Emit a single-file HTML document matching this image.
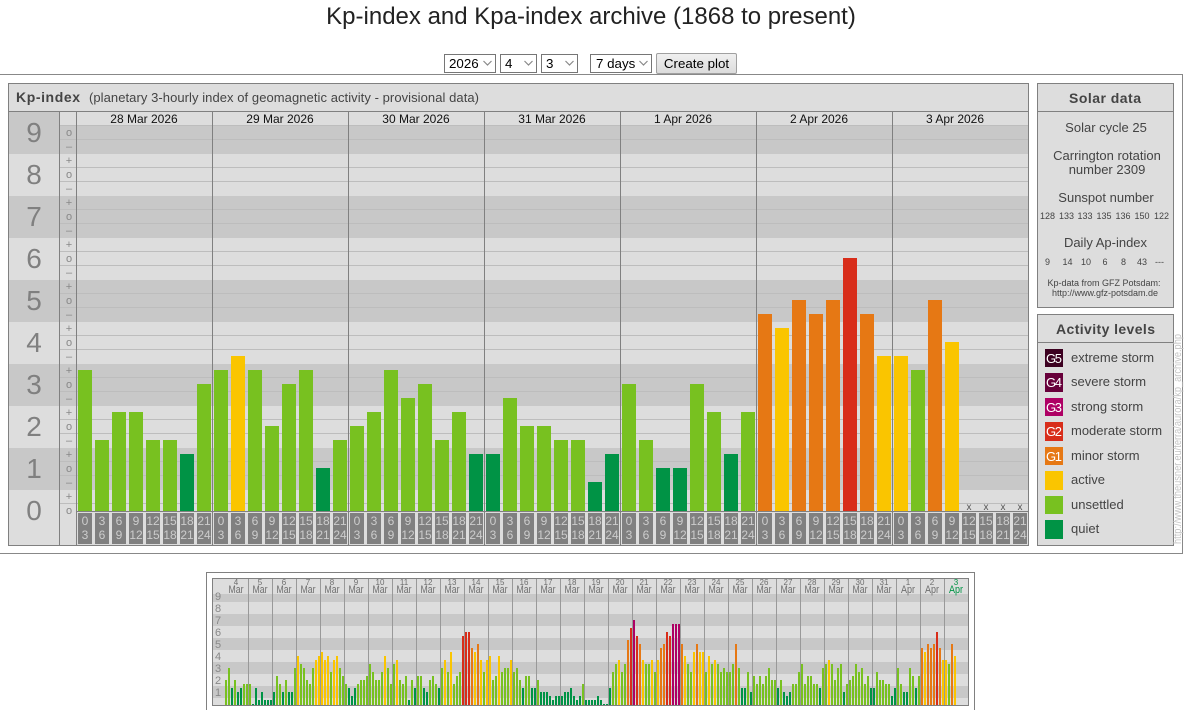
<!DOCTYPE html>
<html><head><meta charset="utf-8"><title>Kp-index and Kpa-index archive</title>
<style>
html,body{margin:0;padding:0;background:#fff;width:1184px;height:710px;overflow:hidden}
body{position:relative;font-family:"Liberation Sans",Arial,sans-serif}
svg{position:absolute;left:0;top:0;font-family:"Liberation Sans",Arial,sans-serif}
select{position:absolute;box-sizing:border-box;top:54px;height:19px;font:13.33px "Liberation Sans",Arial,sans-serif;background:#fff;border:1px solid #767676;padding:0 0 0 1px;margin:0;color:#000;border-radius:0;-webkit-appearance:none;appearance:none}
button{position:absolute;box-sizing:border-box;left:656px;top:53px;width:81px;height:21px;font:13.33px "Liberation Sans",Arial,sans-serif;background:linear-gradient(#f0f0f0,#dcdcdc);border:1px solid #a0a0a0;border-radius:2px;padding:0;color:#000}
.m text{text-anchor:middle}
.main rect{width:14px}
.mini rect{width:2px}
.q{fill:#009345}.u{fill:#78c120}.a{fill:#fac500}.o{fill:#e67814}.r{fill:#d82d1a}.s{fill:#ae0064}
.tk rect{width:14px;height:31px;fill:#808080}
.tk text{font-size:12px;fill:#ccc;text-anchor:middle}
.pm text{font-size:11px;fill:#888;text-anchor:middle}
.big text{font-size:28px;fill:#808080;text-anchor:middle}
.d text{font-size:12px;fill:#111;text-anchor:middle}
.x text{font-size:10px;fill:#555;text-anchor:middle}
.sol text{fill:#444;text-anchor:middle;font-size:13px}
.sol .n text,.sol text.n{font-size:9px}
.leg text{fill:#444;font-size:13px}
.leg text.g{fill:#fff;text-anchor:middle}
.ml text{fill:#888;font-size:11px;text-anchor:middle}
.md text{fill:#6e6e6e;text-anchor:middle}
</style></head><body>
<svg width="1184" height="710" viewBox="0 0 1184 710">
<text x="591" y="24" font-size="24" fill="#222" text-anchor="middle">Kp-index and Kpa-index archive (1868 to present)</text>
<path d="M0 74.5H1182.5V553.5H0" fill="none" stroke="#888"/>
<!-- main chart backgrounds -->
<rect x="8" y="83" width="1021" height="463" fill="#ddd"/>
<g fill="#c8c8c8">
<rect x="9" y="112" width="50" height="42"/><rect x="60" y="125" width="968" height="29"/>
<rect x="9" y="196" width="1019" height="42"/><rect x="9" y="280" width="1019" height="42"/><rect x="9" y="364" width="1019" height="42"/><rect x="9" y="448" width="1019" height="42"/>
</g>
<path d="M60 125.500H1028M60 139.500H1028M60 167.500H1028M60 181.500H1028M60 209.500H1028M60 223.500H1028M60 251.500H1028M60 265.500H1028M60 293.500H1028M60 307.500H1028M60 335.500H1028M60 349.500H1028M60 377.500H1028M60 391.500H1028M60 419.500H1028M60 433.500H1028M60 461.500H1028M60 475.500H1028M60 503.500H1028" stroke="#bdbdbd" fill="none"/>
<!-- bars -->
<g class="main" transform="translate(78,511) scale(1,-1)">
<rect x="0" height="141" class="u"/><rect x="17" height="71" class="u"/><rect x="34" height="99" class="u"/><rect x="51" height="99" class="u"/><rect x="68" height="71" class="u"/><rect x="85" height="71" class="u"/><rect x="102" height="57" class="q"/><rect x="119" height="127" class="u"/>
<rect x="136" height="141" class="u"/><rect x="153" height="155" class="a"/><rect x="170" height="141" class="u"/><rect x="187" height="85" class="u"/><rect x="204" height="127" class="u"/><rect x="221" height="141" class="u"/><rect x="238" height="43" class="q"/><rect x="255" height="71" class="u"/>
<rect x="272" height="85" class="u"/><rect x="289" height="99" class="u"/><rect x="306" height="141" class="u"/><rect x="323" height="113" class="u"/><rect x="340" height="127" class="u"/><rect x="357" height="71" class="u"/><rect x="374" height="99" class="u"/><rect x="391" height="57" class="q"/>
<rect x="408" height="57" class="q"/><rect x="425" height="113" class="u"/><rect x="442" height="85" class="u"/><rect x="459" height="85" class="u"/><rect x="476" height="71" class="u"/><rect x="493" height="71" class="u"/><rect x="510" height="29" class="q"/><rect x="527" height="57" class="q"/>
<rect x="544" height="127" class="u"/><rect x="561" height="71" class="u"/><rect x="578" height="43" class="q"/><rect x="595" height="43" class="q"/><rect x="612" height="127" class="u"/><rect x="629" height="99" class="u"/><rect x="646" height="57" class="q"/><rect x="663" height="99" class="u"/>
<rect x="680" height="197" class="o"/><rect x="697" height="183" class="a"/><rect x="714" height="211" class="o"/><rect x="731" height="197" class="o"/><rect x="748" height="211" class="o"/><rect x="765" height="253" class="r"/><rect x="782" height="197" class="o"/><rect x="799" height="155" class="a"/>
<rect x="816" height="155" class="a"/><rect x="833" height="141" class="u"/><rect x="850" height="211" class="o"/><rect x="867" height="169" class="a"/>
</g>
<path d="M77 511.500H1028" stroke="#808080"/>
<!-- tick boxes -->
<g class="tk" transform="translate(78,513)"><rect x="0"/><rect x="17"/><rect x="34"/><rect x="51"/><rect x="68"/><rect x="85"/><rect x="102"/><rect x="119"/><text x="7" y="12">0</text><text x="7" y="26">3</text><text x="24" y="12">3</text><text x="24" y="26">6</text><text x="41" y="12">6</text><text x="41" y="26">9</text><text x="58" y="12">9</text><text x="58" y="26">12</text><text x="75" y="12">12</text><text x="75" y="26">15</text><text x="92" y="12">15</text><text x="92" y="26">18</text><text x="109" y="12">18</text><text x="109" y="26">21</text><text x="126" y="12">21</text><text x="126" y="26">24</text></g>
<g class="tk" transform="translate(214,513)"><rect x="0"/><rect x="17"/><rect x="34"/><rect x="51"/><rect x="68"/><rect x="85"/><rect x="102"/><rect x="119"/><text x="7" y="12">0</text><text x="7" y="26">3</text><text x="24" y="12">3</text><text x="24" y="26">6</text><text x="41" y="12">6</text><text x="41" y="26">9</text><text x="58" y="12">9</text><text x="58" y="26">12</text><text x="75" y="12">12</text><text x="75" y="26">15</text><text x="92" y="12">15</text><text x="92" y="26">18</text><text x="109" y="12">18</text><text x="109" y="26">21</text><text x="126" y="12">21</text><text x="126" y="26">24</text></g>
<g class="tk" transform="translate(350,513)"><rect x="0"/><rect x="17"/><rect x="34"/><rect x="51"/><rect x="68"/><rect x="85"/><rect x="102"/><rect x="119"/><text x="7" y="12">0</text><text x="7" y="26">3</text><text x="24" y="12">3</text><text x="24" y="26">6</text><text x="41" y="12">6</text><text x="41" y="26">9</text><text x="58" y="12">9</text><text x="58" y="26">12</text><text x="75" y="12">12</text><text x="75" y="26">15</text><text x="92" y="12">15</text><text x="92" y="26">18</text><text x="109" y="12">18</text><text x="109" y="26">21</text><text x="126" y="12">21</text><text x="126" y="26">24</text></g>
<g class="tk" transform="translate(486,513)"><rect x="0"/><rect x="17"/><rect x="34"/><rect x="51"/><rect x="68"/><rect x="85"/><rect x="102"/><rect x="119"/><text x="7" y="12">0</text><text x="7" y="26">3</text><text x="24" y="12">3</text><text x="24" y="26">6</text><text x="41" y="12">6</text><text x="41" y="26">9</text><text x="58" y="12">9</text><text x="58" y="26">12</text><text x="75" y="12">12</text><text x="75" y="26">15</text><text x="92" y="12">15</text><text x="92" y="26">18</text><text x="109" y="12">18</text><text x="109" y="26">21</text><text x="126" y="12">21</text><text x="126" y="26">24</text></g>
<g class="tk" transform="translate(622,513)"><rect x="0"/><rect x="17"/><rect x="34"/><rect x="51"/><rect x="68"/><rect x="85"/><rect x="102"/><rect x="119"/><text x="7" y="12">0</text><text x="7" y="26">3</text><text x="24" y="12">3</text><text x="24" y="26">6</text><text x="41" y="12">6</text><text x="41" y="26">9</text><text x="58" y="12">9</text><text x="58" y="26">12</text><text x="75" y="12">12</text><text x="75" y="26">15</text><text x="92" y="12">15</text><text x="92" y="26">18</text><text x="109" y="12">18</text><text x="109" y="26">21</text><text x="126" y="12">21</text><text x="126" y="26">24</text></g>
<g class="tk" transform="translate(758,513)"><rect x="0"/><rect x="17"/><rect x="34"/><rect x="51"/><rect x="68"/><rect x="85"/><rect x="102"/><rect x="119"/><text x="7" y="12">0</text><text x="7" y="26">3</text><text x="24" y="12">3</text><text x="24" y="26">6</text><text x="41" y="12">6</text><text x="41" y="26">9</text><text x="58" y="12">9</text><text x="58" y="26">12</text><text x="75" y="12">12</text><text x="75" y="26">15</text><text x="92" y="12">15</text><text x="92" y="26">18</text><text x="109" y="12">18</text><text x="109" y="26">21</text><text x="126" y="12">21</text><text x="126" y="26">24</text></g>
<g class="tk" transform="translate(894,513)"><rect x="0"/><rect x="17"/><rect x="34"/><rect x="51"/><rect x="68"/><rect x="85"/><rect x="102"/><rect x="119"/><text x="7" y="12">0</text><text x="7" y="26">3</text><text x="24" y="12">3</text><text x="24" y="26">6</text><text x="41" y="12">6</text><text x="41" y="26">9</text><text x="58" y="12">9</text><text x="58" y="26">12</text><text x="75" y="12">12</text><text x="75" y="26">15</text><text x="92" y="12">15</text><text x="92" y="26">18</text><text x="109" y="12">18</text><text x="109" y="26">21</text><text x="126" y="12">21</text><text x="126" y="26">24</text></g>
<g class="x"><text x="969" y="510">x</text><text x="986" y="510">x</text><text x="1003" y="510">x</text><text x="1020" y="510">x</text></g>
<!-- frame lines -->
<path d="M59.500 112V545M76.500 112V545M212.500 112V545M348.500 112V545M484.500 112V545M620.500 112V545M756.500 112V545M892.500 112V545M9 111.500H1028" stroke="#808080" fill="none"/>
<rect x="8.500" y="83.500" width="1020" height="462" fill="none" stroke="#808080"/>
<!-- header -->
<text x="16" y="102" font-size="14" font-weight="bold" fill="#444" textLength="64">Kp-index</text>
<text x="89" y="102" font-size="13" fill="#444" textLength="390">(planetary 3-hourly index of geomagnetic activity - provisional data)</text>
<g class="d"><text x="144" y="123">28 Mar 2026</text><text x="280" y="123">29 Mar 2026</text><text x="416" y="123">30 Mar 2026</text><text x="552" y="123">31 Mar 2026</text><text x="683" y="123">1 Apr 2026</text><text x="819" y="123">2 Apr 2026</text><text x="955" y="123">3 Apr 2026</text></g>
<g class="big"><text x="34" y="142">9</text><text x="34" y="184">8</text><text x="34" y="226">7</text><text x="34" y="268">6</text><text x="34" y="310">5</text><text x="34" y="352">4</text><text x="34" y="394">3</text><text x="34" y="436">2</text><text x="34" y="478">1</text><text x="34" y="520">0</text></g>
<g class="pm">
<text x="69" y="136">o</text><text x="69" y="150">–</text>
<text x="69" y="164">+</text><text x="69" y="178">o</text><text x="69" y="192">–</text>
<text x="69" y="206">+</text><text x="69" y="220">o</text><text x="69" y="234">–</text>
<text x="69" y="248">+</text><text x="69" y="262">o</text><text x="69" y="276">–</text>
<text x="69" y="290">+</text><text x="69" y="304">o</text><text x="69" y="318">–</text>
<text x="69" y="332">+</text><text x="69" y="346">o</text><text x="69" y="360">–</text>
<text x="69" y="374">+</text><text x="69" y="388">o</text><text x="69" y="402">–</text>
<text x="69" y="416">+</text><text x="69" y="430">o</text><text x="69" y="444">–</text>
<text x="69" y="458">+</text><text x="69" y="472">o</text><text x="69" y="486">–</text>
<text x="69" y="500">+</text><text x="69" y="514">o</text>
</g>
<!-- solar data -->
<rect x="1037.500" y="83.500" width="136" height="224" fill="#ddd" stroke="#808080"/>
<path d="M1038 111.500H1173" stroke="#808080"/>
<g class="sol">
<text x="1105" y="103" font-weight="bold" style="font-size:14px" textLength="72">Solar data</text>
<text x="1106" y="132">Solar cycle 25</text>
<text x="1107" y="160">Carrington rotation</text>
<text x="1107" y="174">number 2309</text>
<text x="1106" y="202">Sunspot number</text>
<g class="n"><text x="1047.500" y="219">128</text><text x="1066.500" y="219">133</text><text x="1085" y="219">133</text><text x="1104" y="219">135</text><text x="1123" y="219">136</text><text x="1142" y="219">150</text><text x="1161.500" y="219">122</text></g>
<text x="1105.500" y="247">Daily Ap-index</text>
<g class="n"><text x="1047.500" y="265">9</text><text x="1067.500" y="265">14</text><text x="1086" y="265">10</text><text x="1105" y="265">6</text><text x="1123.500" y="265">8</text><text x="1142" y="265">43</text><text x="1159.500" y="265">---</text></g>
<g class="n"><text x="1104" y="286">Kp-data from GFZ Potsdam:</text><text x="1105" y="296">http://www.gfz-potsdam.de</text></g>
</g>
<!-- activity -->
<rect x="1037.500" y="314.500" width="136" height="231" fill="#ddd" stroke="#808080"/>
<path d="M1038 342.500H1173" stroke="#808080"/>
<text x="1105.500" y="334" font-size="14" font-weight="bold" fill="#444" text-anchor="middle" textLength="99">Activity levels</text>
<g class="leg">
<rect x="1045" y="349" width="18" height="18" fill="#3c0020"/><rect x="1045" y="373" width="18" height="19" fill="#67003a"/><rect x="1045" y="398" width="18" height="18" fill="#ae0064"/><rect x="1045" y="422" width="18" height="19" fill="#d82d1a"/><rect x="1045" y="447" width="18" height="18" fill="#e67814"/><rect x="1045" y="471" width="18" height="19" fill="#fac500"/><rect x="1045" y="496" width="18" height="18" fill="#78c120"/><rect x="1045" y="520" width="18" height="19" fill="#009345"/>
<text class="g" x="1054" y="363" textLength="16">G5</text><text class="g" x="1054" y="387" textLength="16">G4</text><text class="g" x="1054" y="412" textLength="16">G3</text><text class="g" x="1054" y="436" textLength="16">G2</text><text class="g" x="1054" y="461" textLength="16">G1</text>
<text x="1071" y="362">extreme storm</text><text x="1071" y="386">severe storm</text><text x="1071" y="411">strong storm</text><text x="1071" y="435">moderate storm</text><text x="1071" y="460">minor storm</text><text x="1071" y="484">active</text><text x="1071" y="509">unsettled</text><text x="1071" y="533">quiet</text>
</g>
<text transform="translate(1181,544) rotate(-90)" font-size="11" fill="#c4c4c4" textLength="210" lengthAdjust="spacingAndGlyphs">http://www.theusner.eu/terra/aurora/kp_archive.php</text>
<!-- mini chart -->
<path d="M206.500 712V572.500H974.500V712" fill="none" stroke="#808080"/>
<rect x="212" y="578" width="757" height="128" fill="#ddd"/>
<g fill="#c8c8c8"><rect x="213" y="594" width="755" height="8"/><rect x="213" y="614" width="755" height="12"/><rect x="213" y="638" width="755" height="12"/><rect x="213" y="662" width="755" height="12"/><rect x="213" y="686" width="755" height="12"/></g>
<g class="mini" transform="translate(224,705) scale(1,-1)">
<g><rect x="1" height="25" class="u"/><rect x="4" height="37" class="u"/><rect x="7" height="17" class="q"/><rect x="10" height="25" class="u"/><rect x="13" height="13" class="q"/><rect x="16" height="17" class="q"/><rect x="19" height="21" class="u"/><rect x="22" height="21" class="u"/></g>
<g transform="translate(24,0)"><rect x="1" height="21" class="u"/><rect x="4" height="1" class="q"/><rect x="7" height="17" class="q"/><rect x="10" height="5" class="q"/><rect x="13" height="13" class="q"/><rect x="16" height="5" class="q"/><rect x="19" height="5" class="q"/><rect x="22" height="5" class="q"/></g>
<g transform="translate(48,0)"><rect x="1" height="13" class="q"/><rect x="4" height="29" class="u"/><rect x="7" height="21" class="u"/><rect x="10" height="13" class="q"/><rect x="13" height="25" class="u"/><rect x="16" height="13" class="q"/><rect x="19" height="13" class="q"/><rect x="22" height="37" class="u"/></g>
<g transform="translate(72,0)"><rect x="1" height="49" class="a"/><rect x="4" height="41" class="u"/><rect x="7" height="37" class="u"/><rect x="10" height="25" class="u"/><rect x="13" height="21" class="u"/><rect x="16" height="37" class="u"/><rect x="19" height="45" class="a"/><rect x="22" height="49" class="a"/></g>
<g transform="translate(96,0)"><rect x="1" height="53" class="a"/><rect x="4" height="45" class="a"/><rect x="7" height="49" class="a"/><rect x="10" height="33" class="u"/><rect x="13" height="45" class="a"/><rect x="16" height="49" class="a"/><rect x="19" height="37" class="u"/><rect x="22" height="29" class="u"/></g>
<g transform="translate(120,0)"><rect x="1" height="21" class="u"/><rect x="4" height="17" class="q"/><rect x="7" height="9" class="q"/><rect x="10" height="17" class="q"/><rect x="13" height="21" class="u"/><rect x="16" height="25" class="u"/><rect x="19" height="25" class="u"/><rect x="22" height="29" class="u"/></g>
<g transform="translate(144,0)"><rect x="1" height="41" class="u"/><rect x="4" height="33" class="u"/><rect x="7" height="25" class="u"/><rect x="10" height="25" class="u"/><rect x="13" height="33" class="u"/><rect x="16" height="49" class="a"/><rect x="19" height="37" class="u"/><rect x="22" height="21" class="u"/></g>
<g transform="translate(168,0)"><rect x="1" height="41" class="u"/><rect x="4" height="45" class="a"/><rect x="7" height="25" class="u"/><rect x="10" height="21" class="u"/><rect x="13" height="29" class="u"/><rect x="16" height="5" class="q"/><rect x="19" height="25" class="u"/><rect x="22" height="17" class="q"/></g>
<g transform="translate(192,0)"><rect x="1" height="29" class="u"/><rect x="4" height="29" class="u"/><rect x="7" height="17" class="q"/><rect x="10" height="13" class="q"/><rect x="13" height="25" class="u"/><rect x="16" height="29" class="u"/><rect x="19" height="21" class="u"/><rect x="22" height="17" class="q"/></g>
<g transform="translate(216,0)"><rect x="1" height="37" class="u"/><rect x="4" height="45" class="a"/><rect x="7" height="33" class="u"/><rect x="10" height="53" class="a"/><rect x="13" height="21" class="u"/><rect x="16" height="29" class="u"/><rect x="19" height="33" class="u"/><rect x="22" height="69" class="r"/></g>
<g transform="translate(240,0)"><rect x="1" height="73" class="r"/><rect x="4" height="73" class="r"/><rect x="7" height="57" class="o"/><rect x="10" height="53" class="a"/><rect x="13" height="61" class="o"/><rect x="16" height="45" class="a"/><rect x="19" height="33" class="u"/><rect x="22" height="45" class="a"/></g>
<g transform="translate(264,0)"><rect x="1" height="49" class="a"/><rect x="4" height="25" class="u"/><rect x="7" height="29" class="u"/><rect x="10" height="49" class="a"/><rect x="13" height="33" class="u"/><rect x="16" height="37" class="u"/><rect x="19" height="37" class="u"/><rect x="22" height="45" class="a"/></g>
<g transform="translate(288,0)"><rect x="1" height="33" class="u"/><rect x="4" height="37" class="u"/><rect x="7" height="25" class="u"/><rect x="10" height="17" class="q"/><rect x="13" height="29" class="u"/><rect x="16" height="29" class="u"/><rect x="19" height="17" class="q"/><rect x="22" height="17" class="q"/></g>
<g transform="translate(312,0)"><rect x="1" height="25" class="u"/><rect x="4" height="13" class="q"/><rect x="7" height="13" class="q"/><rect x="10" height="13" class="q"/><rect x="13" height="9" class="q"/><rect x="16" height="5" class="q"/><rect x="19" height="9" class="q"/><rect x="22" height="9" class="q"/></g>
<g transform="translate(336,0)"><rect x="1" height="9" class="q"/><rect x="4" height="13" class="q"/><rect x="7" height="13" class="q"/><rect x="10" height="17" class="q"/><rect x="13" height="9" class="q"/><rect x="16" height="5" class="q"/><rect x="19" height="9" class="q"/><rect x="22" height="21" class="u"/></g>
<g transform="translate(360,0)"><rect x="1" height="5" class="q"/><rect x="4" height="5" class="q"/><rect x="7" height="5" class="q"/><rect x="10" height="5" class="q"/><rect x="13" height="9" class="q"/><rect x="16" height="5" class="q"/><rect x="19" height="1" class="q"/><rect x="22" height="1" class="q"/></g>
<g transform="translate(384,0)"><rect x="1" height="17" class="q"/><rect x="4" height="33" class="u"/><rect x="7" height="41" class="u"/><rect x="10" height="45" class="a"/><rect x="13" height="33" class="u"/><rect x="16" height="41" class="u"/><rect x="19" height="65" class="o"/><rect x="22" height="77" class="r"/></g>
<g transform="translate(408,0)"><rect x="1" height="85" class="s"/><rect x="4" height="69" class="r"/><rect x="7" height="61" class="o"/><rect x="10" height="45" class="a"/><rect x="13" height="41" class="u"/><rect x="16" height="41" class="u"/><rect x="19" height="45" class="a"/><rect x="22" height="33" class="u"/></g>
<g transform="translate(432,0)"><rect x="1" height="45" class="a"/><rect x="4" height="57" class="o"/><rect x="7" height="61" class="o"/><rect x="10" height="73" class="r"/><rect x="13" height="69" class="r"/><rect x="16" height="81" class="s"/><rect x="19" height="81" class="s"/><rect x="22" height="81" class="s"/></g>
<g transform="translate(456,0)"><rect x="1" height="61" class="o"/><rect x="4" height="49" class="a"/><rect x="7" height="41" class="u"/><rect x="10" height="33" class="u"/><rect x="13" height="53" class="a"/><rect x="16" height="61" class="o"/><rect x="19" height="53" class="a"/><rect x="22" height="53" class="a"/></g>
<g transform="translate(480,0)"><rect x="1" height="33" class="u"/><rect x="4" height="49" class="a"/><rect x="7" height="41" class="u"/><rect x="10" height="45" class="a"/><rect x="13" height="41" class="u"/><rect x="16" height="33" class="u"/><rect x="19" height="37" class="u"/><rect x="22" height="33" class="u"/></g>
<g transform="translate(504,0)"><rect x="1" height="33" class="u"/><rect x="4" height="41" class="u"/><rect x="7" height="61" class="o"/><rect x="10" height="37" class="u"/><rect x="13" height="17" class="q"/><rect x="16" height="17" class="q"/><rect x="19" height="33" class="u"/><rect x="22" height="13" class="q"/></g>
<g transform="translate(528,0)"><rect x="1" height="29" class="u"/><rect x="4" height="21" class="u"/><rect x="7" height="29" class="u"/><rect x="10" height="21" class="u"/><rect x="13" height="29" class="u"/><rect x="16" height="37" class="u"/><rect x="19" height="25" class="u"/><rect x="22" height="25" class="u"/></g>
<g transform="translate(552,0)"><rect x="1" height="17" class="q"/><rect x="4" height="25" class="u"/><rect x="7" height="13" class="q"/><rect x="10" height="9" class="q"/><rect x="13" height="13" class="q"/><rect x="16" height="21" class="u"/><rect x="19" height="21" class="u"/><rect x="22" height="33" class="u"/></g>
<g transform="translate(576,0)"><rect x="1" height="41" class="u"/><rect x="4" height="21" class="u"/><rect x="7" height="29" class="u"/><rect x="10" height="29" class="u"/><rect x="13" height="21" class="u"/><rect x="16" height="21" class="u"/><rect x="19" height="17" class="q"/><rect x="22" height="37" class="u"/></g>
<g transform="translate(600,0)"><rect x="1" height="41" class="u"/><rect x="4" height="45" class="a"/><rect x="7" height="41" class="u"/><rect x="10" height="25" class="u"/><rect x="13" height="37" class="u"/><rect x="16" height="41" class="u"/><rect x="19" height="13" class="q"/><rect x="22" height="21" class="u"/></g>
<g transform="translate(624,0)"><rect x="1" height="25" class="u"/><rect x="4" height="29" class="u"/><rect x="7" height="41" class="u"/><rect x="10" height="33" class="u"/><rect x="13" height="37" class="u"/><rect x="16" height="21" class="u"/><rect x="19" height="29" class="u"/><rect x="22" height="17" class="q"/></g>
<g transform="translate(648,0)"><rect x="1" height="17" class="q"/><rect x="4" height="33" class="u"/><rect x="7" height="25" class="u"/><rect x="10" height="25" class="u"/><rect x="13" height="21" class="u"/><rect x="16" height="21" class="u"/><rect x="19" height="9" class="q"/><rect x="22" height="17" class="q"/></g>
<g transform="translate(672,0)"><rect x="1" height="37" class="u"/><rect x="4" height="21" class="u"/><rect x="7" height="13" class="q"/><rect x="10" height="13" class="q"/><rect x="13" height="37" class="u"/><rect x="16" height="29" class="u"/><rect x="19" height="17" class="q"/><rect x="22" height="29" class="u"/></g>
<g transform="translate(696,0)"><rect x="1" height="57" class="o"/><rect x="4" height="53" class="a"/><rect x="7" height="61" class="o"/><rect x="10" height="57" class="o"/><rect x="13" height="61" class="o"/><rect x="16" height="73" class="r"/><rect x="19" height="57" class="o"/><rect x="22" height="45" class="a"/></g>
<g transform="translate(720,0)"><rect x="1" height="45" class="a"/><rect x="4" height="41" class="u"/><rect x="7" height="61" class="o"/><rect x="10" height="49" class="a"/></g>
</g>
<path d="M248.500 578V705M272.500 578V705M296.500 578V705M320.500 578V705M344.500 578V705M368.500 578V705M392.500 578V705M416.500 578V705M440.500 578V705M464.500 578V705M488.500 578V705M512.500 578V705M536.500 578V705M560.500 578V705M584.500 578V705M608.500 578V705M632.500 578V705M656.500 578V705M680.500 578V705M704.500 578V705M728.500 578V705M752.500 578V705M776.500 578V705M800.500 578V705M824.500 578V705M848.500 578V705M872.500 578V705M896.500 578V705M920.500 578V705M944.500 578V705" stroke="#999" fill="none"/>
<rect x="212.500" y="578.500" width="756" height="127" fill="none" stroke="#808080"/>
<g class="ml"><text x="218" y="600">9</text><text x="218" y="612">8</text><text x="218" y="624">7</text><text x="218" y="636">6</text><text x="218" y="648">5</text><text x="218" y="660">4</text><text x="218" y="672">3</text><text x="218" y="684">2</text><text x="218" y="696">1</text></g>
<g class="md" font-size="8">
<text x="236" y="585">4</text><text x="260" y="585">5</text><text x="284" y="585">6</text><text x="308" y="585">7</text><text x="332" y="585">8</text><text x="356" y="585">9</text><text x="380" y="585">10</text><text x="404" y="585">11</text><text x="428" y="585">12</text><text x="452" y="585">13</text><text x="476" y="585">14</text><text x="500" y="585">15</text><text x="524" y="585">16</text><text x="548" y="585">17</text><text x="572" y="585">18</text><text x="596" y="585">19</text><text x="620" y="585">20</text><text x="644" y="585">21</text><text x="668" y="585">22</text><text x="692" y="585">23</text><text x="716" y="585">24</text><text x="740" y="585">25</text><text x="764" y="585">26</text><text x="788" y="585">27</text><text x="812" y="585">28</text><text x="836" y="585">29</text><text x="860" y="585">30</text><text x="884" y="585">31</text><text x="908" y="585">1</text><text x="932" y="585">2</text><text x="956" y="585" style="fill:#009345">3</text>
</g>
<g class="md" font-size="11">
<text x="236" y="593" textLength="15" lengthAdjust="spacingAndGlyphs">Mar</text><text x="260" y="593" textLength="15" lengthAdjust="spacingAndGlyphs">Mar</text><text x="284" y="593" textLength="15" lengthAdjust="spacingAndGlyphs">Mar</text><text x="308" y="593" textLength="15" lengthAdjust="spacingAndGlyphs">Mar</text><text x="332" y="593" textLength="15" lengthAdjust="spacingAndGlyphs">Mar</text><text x="356" y="593" textLength="15" lengthAdjust="spacingAndGlyphs">Mar</text><text x="380" y="593" textLength="15" lengthAdjust="spacingAndGlyphs">Mar</text><text x="404" y="593" textLength="15" lengthAdjust="spacingAndGlyphs">Mar</text><text x="428" y="593" textLength="15" lengthAdjust="spacingAndGlyphs">Mar</text><text x="452" y="593" textLength="15" lengthAdjust="spacingAndGlyphs">Mar</text><text x="476" y="593" textLength="15" lengthAdjust="spacingAndGlyphs">Mar</text><text x="500" y="593" textLength="15" lengthAdjust="spacingAndGlyphs">Mar</text><text x="524" y="593" textLength="15" lengthAdjust="spacingAndGlyphs">Mar</text><text x="548" y="593" textLength="15" lengthAdjust="spacingAndGlyphs">Mar</text><text x="572" y="593" textLength="15" lengthAdjust="spacingAndGlyphs">Mar</text><text x="596" y="593" textLength="15" lengthAdjust="spacingAndGlyphs">Mar</text><text x="620" y="593" textLength="15" lengthAdjust="spacingAndGlyphs">Mar</text><text x="644" y="593" textLength="15" lengthAdjust="spacingAndGlyphs">Mar</text><text x="668" y="593" textLength="15" lengthAdjust="spacingAndGlyphs">Mar</text><text x="692" y="593" textLength="15" lengthAdjust="spacingAndGlyphs">Mar</text><text x="716" y="593" textLength="15" lengthAdjust="spacingAndGlyphs">Mar</text><text x="740" y="593" textLength="15" lengthAdjust="spacingAndGlyphs">Mar</text><text x="764" y="593" textLength="15" lengthAdjust="spacingAndGlyphs">Mar</text><text x="788" y="593" textLength="15" lengthAdjust="spacingAndGlyphs">Mar</text><text x="812" y="593" textLength="15" lengthAdjust="spacingAndGlyphs">Mar</text><text x="836" y="593" textLength="15" lengthAdjust="spacingAndGlyphs">Mar</text><text x="860" y="593" textLength="15" lengthAdjust="spacingAndGlyphs">Mar</text><text x="884" y="593" textLength="15" lengthAdjust="spacingAndGlyphs">Mar</text><text x="908" y="593" textLength="14" lengthAdjust="spacingAndGlyphs">Apr</text><text x="932" y="593" textLength="14" lengthAdjust="spacingAndGlyphs">Apr</text><text x="956" y="593" textLength="14" lengthAdjust="spacingAndGlyphs" style="fill:#009345">Apr</text>
</g>
</svg>
<select style="left:444px;width:52px;padding-left:4px"><option>2026</option></select>
<select style="left:500px;width:37px;padding-left:4px"><option>4</option></select>
<select style="left:541px;width:37px;padding-left:4px"><option>3</option></select>
<select style="left:590px;width:62px;padding-left:5px"><option>7 days</option></select>
<button>Create plot</button>
<svg width="1184" height="80" viewBox="0 0 1184 80" style="pointer-events:none"><path d="M483.500 61l4 4 4-4M524.500 61l4 4 4-4M565.500 61l4 4 4-4M639.500 61l4 4 4-4" fill="none" stroke="#8a8a8a" stroke-width="1.200"/></svg>
</body></html>
